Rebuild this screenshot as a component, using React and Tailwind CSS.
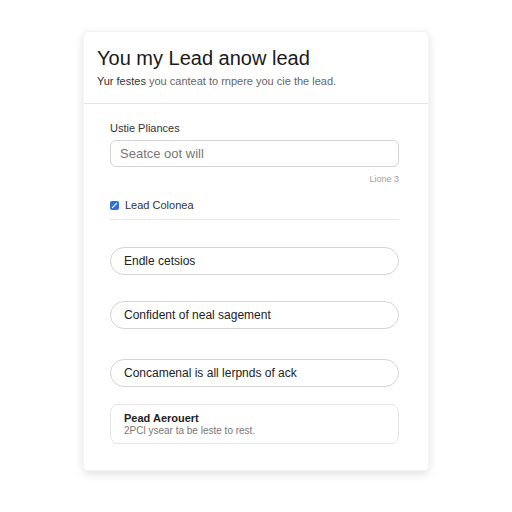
export default function App() {
  const pills = [
    'Endle cetsios',
    'Confident of neal sagement',
    'Concamenal is all lerpnds of ack',
  ]
  return (
    <div className="w-[512px] h-[512px] bg-white flex justify-center pt-[31px]" style={{ fontFamily: 'Arimo, "Liberation Sans", Arial, sans-serif' }}>
      <div className="w-[346px] h-[440px] bg-white rounded-[5px] shadow-[0_3px_10px_rgba(0,0,0,0.12)] border border-gray-100 flex flex-col">
        <div className="px-[13px] pt-[14px]">
          <h1 className="text-[20px] leading-[24px] text-[#1a1a1a]">You my Lead anow lead</h1>
          <p className="mt-[4px] text-[11px] leading-[14px] text-[#666]">
            <span className="text-[#333]">Yur festes</span> you canteat to rnpere you cie the lead.
          </p>
        </div>
        <div className="mt-[15px] h-px bg-neutral-200" />
        <div className="pl-[26px] pr-[29px] flex flex-col">
          <label className="mt-[17px] text-[11px] leading-[14px] text-[#333]">Ustie Pliances</label>
          <div className="mt-[5px] h-[27px] rounded-[6px] border border-neutral-300 flex items-center px-[9px] text-[13px] text-[#777]">
            Seatce oot will
          </div>
          <div className="mt-[6px] text-right text-[9px] leading-[12px] text-neutral-400">Lione 3</div>
          <div className="mt-[13px] flex items-center gap-[6px]">
            <span className="w-[9px] h-[9px] rounded-[2px] bg-[#2f6fd6] flex items-center justify-center">
              <svg width="7" height="7" viewBox="0 0 10 10">
                <path d="M2 8 L8 2" stroke="white" strokeWidth="1.8" strokeLinecap="round" />
              </svg>
            </span>
            <span className="text-[11px] leading-[14px] text-[#333]">Lead Colonea</span>
          </div>
          <div className="mt-[7px] h-px bg-neutral-200" />
          <div className="mt-[27px] flex flex-col gap-[26px]">
            {pills.map((p, i) => (
              <div
                key={p}
                className={`h-[28px] rounded-full border border-neutral-300 flex items-center px-[13px] text-[12px] text-[#222] ${i === 2 ? 'mt-[4px]' : ''}`}
              >
                {p}
              </div>
            ))}
          </div>
          <div className="mt-[17px] h-[40px] rounded-[8px] border border-neutral-200 flex flex-col justify-center px-[13px]">
            <span className="text-[11px] leading-[13px] font-semibold text-[#222]">Pead Aerouert</span>
            <span className="text-[10px] leading-[12px] text-[#777]">2PCl ysear ta be leste to rest.</span>
          </div>
        </div>
      </div>
    </div>
  )
}
